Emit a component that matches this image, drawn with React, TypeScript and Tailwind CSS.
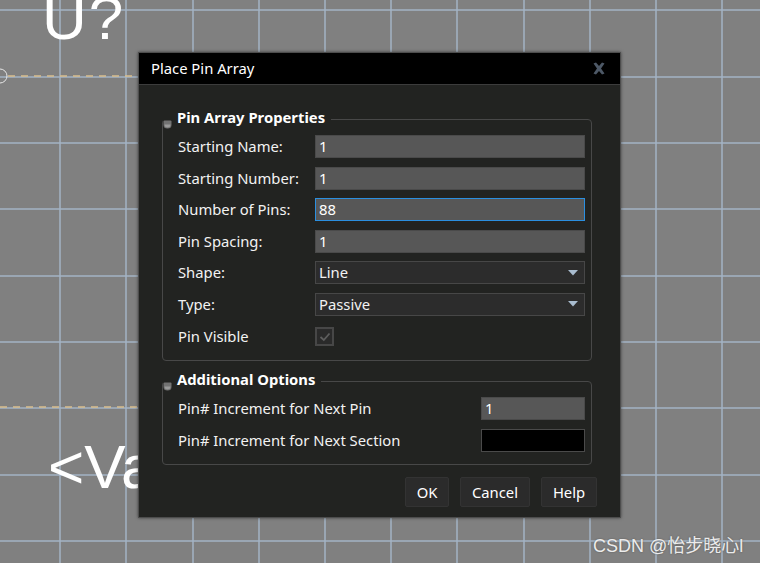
import React from 'react';

const GRID_X = [60, 126, 193, 259, 325, 391, 457, 524, 590, 656, 722];
const GRID_Y = [10, 77, 143, 209, 276, 342, 408, 475, 541];

function Canvas() {
    return (
        <svg className="absolute inset-0" width="760" height="563">
            <rect width="760" height="563" fill="#808080" />
            {GRID_X.map((x) => (
                <line key={'x' + x} x1={x} y1={0} x2={x} y2={563} stroke="#a3b3c4" strokeWidth="1.5" />
            ))}
            {GRID_Y.map((y) => (
                <line key={'y' + y} x1={0} y1={y} x2={760} y2={y} stroke="#a3b3c4" strokeWidth="1.5" />
            ))}
            <line x1={8} y1={76} x2={140} y2={76} stroke="#d9bf8f" strokeWidth="1.5" strokeDasharray="7 6" />
            <line x1={0} y1={407} x2={140} y2={407} stroke="#d9bf8f" strokeWidth="1.5" strokeDasharray="7 6" />
            <circle cx={0} cy={76} r={7} fill="none" stroke="#e6e6e6" strokeWidth="1" />
        </svg>
    );
}

function Collapse() {
    return (
        <svg width="9" height="9" viewBox="0 0 9 9" className="shrink-0 translate-y-[5px]">
            <path d="M0.5 1.5 Q0.5 0.5 1.5 0.5 L7.5 0.5 Q8.5 0.5 8.5 1.5 L8.5 5 Q8.5 8.5 4.5 8.5 Q0.5 8.5 0.5 5 Z" fill="#727272" />
            <path d="M1.5 4.5 L7.5 4.5 Q7.5 7.5 4.5 7.5 Q1.5 7.5 1.5 4.5 Z" fill="#9a9a9a" />
        </svg>
    );
}

function TextInput({ value, focus }: { value: string; focus?: boolean }) {
    return (
        <div
            className={
                'w-[270px] h-[23px] bg-[#575757] flex items-center px-[3px] text-white ' +
                (focus ? 'border border-[#2b8fe0]' : 'border border-[#4a4a4a]')
            }
        >
            {value}
        </div>
    );
}

function Select({ value }: { value: string }) {
    return (
        <div className="w-[270px] h-[23px] bg-[#2c2c2c] border border-[#474747] flex items-center justify-between px-[3px]">
            <span>{value}</span>
            <svg width="10" height="6" viewBox="0 0 10 6" className="mr-[3px]">
                <path d="M0 0 L10 0 L5 5.5 Z" fill="#a9bccf" />
            </svg>
        </div>
    );
}

function Row({ label, children }: { label: string; children: React.ReactNode }) {
    return (
        <div className="flex items-center h-[23px]">
            <span className="w-[137px] whitespace-nowrap">{label}</span>
            {children}
        </div>
    );
}

function Button({ label, w }: { label: string; w: string }) {
    return (
        <div className={'h-[30px] bg-[#2b2b2b] border border-[#333] rounded-[2px] flex items-center justify-center text-white ' + w}>
            {label}
        </div>
    );
}

function GroupTitle({ title }: { title: string }) {
    return (
        <legend className="flex items-center gap-[5px] pr-[6px] font-bold text-white h-[20px]">
            <Collapse />
            <span className="-mt-[3px]">{title}</span>
        </legend>
    );
}

export default function App() {
    return (
        <div className="relative w-[760px] h-[563px] overflow-hidden" style={{ fontFamily: '"Noto Sans", sans-serif' }}>
            <Canvas />
            <div
                className="absolute left-[42px] top-[-13px] text-white text-[62px] leading-none tracking-[2px]"
                style={{ fontFamily: '"Liberation Sans", Arial, sans-serif' }}
            >
                U?
            </div>
            <div
                className="absolute left-[48px] top-[436px] text-white text-[62px] leading-none"
                style={{ fontFamily: '"Liberation Sans", Arial, sans-serif' }}
            >
                &lt;Va
            </div>

            <div className="absolute left-[138px] top-[52px] w-[483px] h-[466px] bg-[#222321] border border-[#4d4d4d] flex flex-col text-[14.8px] text-[#f2f2f2] shadow-[0_0_3px_rgba(0,0,0,0.5)]">
                <div className="h-[32px] bg-black border-b border-[#3c3c3c] flex items-center justify-between pl-[12px] pr-[15px] shrink-0">
                    <span className="text-white">Place Pin Array</span>
                    <svg width="12" height="13" viewBox="0 0 12 13">
                        <path
                            d="M0.5 1.5 L3 0.5 L6 4 L9 0.5 L11.5 1.5 L8 6.5 L11.5 11.5 L9 12.5 L6 9 L3 12.5 L0.5 11.5 L4 6.5 Z"
                            fill="#4d5866"
                        />
                    </svg>
                </div>

                <div className="flex flex-col pl-[23px] pr-[28px] pt-[24px]">
                    <fieldset className="border border-[#484848] rounded-[4px] pb-[12px]">
                        <GroupTitle title="Pin Array Properties" />
                        <div className="flex flex-col gap-[8.5px] mt-[6px] pl-[15px] pr-[6px]">
                            <Row label="Starting Name:">
                                <TextInput value="1" />
                            </Row>
                            <Row label="Starting Number:">
                                <TextInput value="1" />
                            </Row>
                            <Row label="Number of Pins:">
                                <TextInput value="88" focus />
                            </Row>
                            <Row label="Pin Spacing:">
                                <TextInput value="1" />
                            </Row>
                            <Row label="Shape:">
                                <Select value="Line" />
                            </Row>
                            <Row label="Type:">
                                <Select value="Passive" />
                            </Row>
                            <div className="flex items-center h-[23px] mt-[1px]">
                                <span className="w-[137px]">Pin Visible</span>
                                <div className="w-[19px] h-[19px] bg-[#2a2a2a] border-2 border-[#474747] flex items-center justify-center">
                                    <svg width="12" height="10" viewBox="0 0 12 10">
                                        <path d="M1.5 5 L4.8 8 L10.5 1.5" stroke="#5e5e5e" strokeWidth="1.8" fill="none" />
                                    </svg>
                                </div>
                            </div>
                        </div>
                    </fieldset>

                    <fieldset className="border border-[#484848] rounded-[4px] pb-[12px] mt-[10px]">
                        <GroupTitle title="Additional Options" />
                        <div className="flex flex-col gap-[9px] mt-[6px] pl-[15px] pr-[6px]">
                            <div className="flex items-center justify-between h-[23px]">
                                <span>Pin# Increment for Next Pin</span>
                                <div className="w-[104px] h-[23px] bg-[#575757] border border-[#4a4a4a] flex items-center px-[3px] text-white">1</div>
                            </div>
                            <div className="flex items-center justify-between h-[23px]">
                                <span>Pin# Increment for Next Section</span>
                                <div className="w-[104px] h-[23px] bg-black border border-[#4a4a4a]" />
                            </div>
                        </div>
                    </fieldset>
                </div>

                <div className="flex justify-end gap-[11px] pr-[23px] mt-[12px]">
                    <Button label="OK" w="w-[44px]" />
                    <Button label="Cancel" w="w-[70px]" />
                    <Button label="Help" w="w-[56px]" />
                </div>
            </div>

            <div
                className="absolute left-[593px] top-[533px] text-[18px] text-[#ececec] [text-shadow:0_0_2px_rgba(0,0,0,0.35)]"
                style={{ fontFamily: '"Liberation Sans", "Noto Sans CJK SC", sans-serif' }}
            >
                CSDN @怡步晓心l
            </div>
        </div>
    );
}
